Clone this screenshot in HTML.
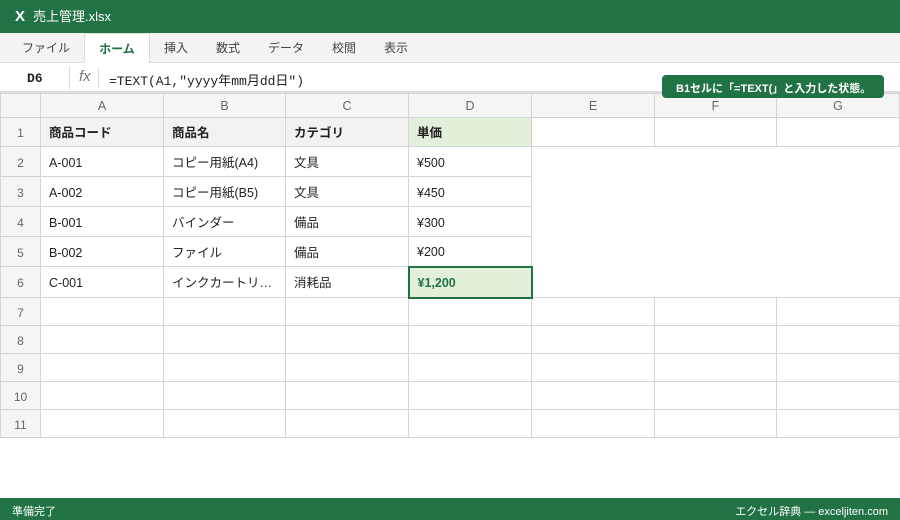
<!DOCTYPE html>
<html><head><meta charset="utf-8"><style>
*{margin:0;padding:0;box-sizing:border-box}
body{width:900px;height:520px;overflow:hidden;background:#fff;font-family:"Liberation Sans","Noto Sans CJK JP",sans-serif;position:relative;color:#222}
.title{position:absolute;left:0;top:0;width:900px;height:33px;background:#217346;color:#fff;font-size:13px}
.title b{position:absolute;left:15px;top:8px;font-size:15px;line-height:18px}
.title span{position:absolute;left:33px;top:8px;line-height:18px}
.tabs{position:absolute;left:0;top:33px;width:900px;height:30px;background:#f3f3f3;border-bottom:1px solid #ddd;font-size:12px;color:#444}
.tabs span{position:absolute;top:7px;line-height:16px}
.tabs .act{position:absolute;top:0;left:84px;width:66px;height:31px;background:#fff;border:1px solid #ddd;border-bottom:none;color:#217346;font-weight:bold;text-align:center;padding-top:7px;line-height:16px}
.fbar{position:absolute;left:0;top:63px;width:900px;height:30px;background:#fff;border-bottom:2px solid #ddd;font-size:13px}
.fbar .nm{position:absolute;left:27px;top:8px;font-weight:bold;font-family:"Liberation Mono",monospace}
.fbar .sep1{position:absolute;left:69px;top:3px;height:24px;border-left:1px solid #ddd}
.fbar .fx{position:absolute;left:79px;top:5px;font-style:italic;color:#777;font-family:"Liberation Sans",sans-serif;font-size:15px}
.fbar .sep2{position:absolute;left:98px;top:5px;height:20px;border-left:1px solid #ddd}
.fbar .f{position:absolute;left:109px;top:7px;font-family:"Liberation Mono","Noto Sans CJK JP",monospace;font-size:13px}
table{position:absolute;left:0;top:93px;border-collapse:collapse;table-layout:fixed;font-size:12.5px}
td{border:1px solid #d4d4d4;padding-left:8px;white-space:nowrap;overflow:hidden;line-height:16px;padding-top:2px}
.h td{background:#f5f5f5;text-align:center;color:#666;padding:0;height:24px}
td.r{background:#f5f5f5;text-align:center;color:#666;padding:2px 0 0 0;font-size:12px}
.b1 td.g{background:#f2f2f2;font-weight:bold}
.sel{background:#e2efda}
.hl{background:#e2efda!important;font-weight:bold;color:#217346;border:2px solid #217346!important}
.none{border:none;border-left:1px solid #d4d4d4}
.tip{position:absolute;left:662px;top:75px;width:222px;height:23px;background:#217346;color:#fff;font-size:11px;font-weight:bold;border-radius:4px;padding:5px 0 0 14px}
.status{position:absolute;left:0;top:498px;width:900px;height:22px;background:#217346;color:#fff;font-size:11px}
</style></head><body>
<div class="title"><b>X</b><span>売上管理.xlsx</span></div>
<div class="tabs"><span style="left:22px">ファイル</span><div class="act">ホーム</div><span style="left:164px">挿入</span><span style="left:216px">数式</span><span style="left:268px">データ</span><span style="left:332px">校閲</span><span style="left:384px">表示</span></div>
<div class="fbar"><span class="nm">D6</span><i class="sep1"></i><span class="fx">fx</span><i class="sep2"></i><span class="f">=TEXT(A1,"yyyy年mm月dd日")</span></div>
<table>
<colgroup><col style="width:40px"><col style="width:123px"><col style="width:122px"><col style="width:123px"><col style="width:123px"><col style="width:123px"><col style="width:122px"><col style="width:123px"></colgroup>
<tr class="h"><td></td><td>A</td><td>B</td><td>C</td><td>D</td><td>E</td><td>F</td><td>G</td></tr>
<tr class="b1" style="height:29px"><td class="r">1</td><td class="g">商品コード</td><td class="g">商品名</td><td class="g">カテゴリ</td><td class="sel" style="font-weight:bold">単価</td><td></td><td></td><td></td></tr>
<tr style="height:30px"><td class="r">2</td><td>A-001</td><td>コピー用紙(A4)</td><td>文具</td><td>¥500</td><td class="none" colspan="3" rowspan="4"></td></tr>
<tr style="height:30px"><td class="r">3</td><td>A-002</td><td>コピー用紙(B5)</td><td>文具</td><td>¥450</td></tr>
<tr style="height:30px"><td class="r">4</td><td>B-001</td><td>バインダー</td><td>備品</td><td>¥300</td></tr>
<tr style="height:30px"><td class="r">5</td><td>B-002</td><td>ファイル</td><td>備品</td><td>¥200</td></tr>
<tr style="height:31px"><td class="r">6</td><td>C-001</td><td>インクカートリ…</td><td>消耗品</td><td class="hl">¥1,200</td><td class="none" colspan="3"></td></tr>
<tr style="height:28px"><td class="r">7</td><td></td><td></td><td></td><td></td><td></td><td></td><td></td></tr>
<tr style="height:28px"><td class="r">8</td><td></td><td></td><td></td><td></td><td></td><td></td><td></td></tr>
<tr style="height:28px"><td class="r">9</td><td></td><td></td><td></td><td></td><td></td><td></td><td></td></tr>
<tr style="height:28px"><td class="r">10</td><td></td><td></td><td></td><td></td><td></td><td></td><td></td></tr>
<tr style="height:28px"><td class="r">11</td><td></td><td></td><td></td><td></td><td></td><td></td><td></td></tr>
</table>
<div class="tip">B1セルに「=TEXT(」と入力した状態。</div>
<div class="status"><span style="position:absolute;left:12px;top:5px">準備完了</span><span style="position:absolute;right:12px;top:5px">エクセル辞典 — exceljiten.com</span></div>
</body></html>
